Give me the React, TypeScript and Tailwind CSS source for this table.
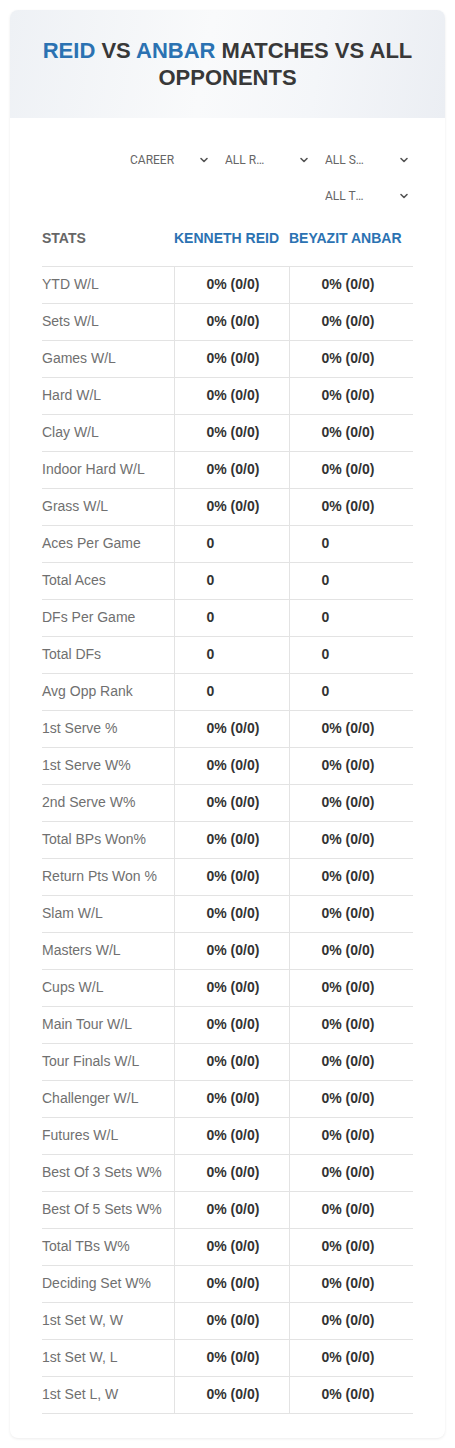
import { ChevronDown } from "lucide-react";

const pct = "0% (0/0)";

const rows: [string, string, string][] = [
  ["YTD W/L", pct, pct],
  ["Sets W/L", pct, pct],
  ["Games W/L", pct, pct],
  ["Hard W/L", pct, pct],
  ["Clay W/L", pct, pct],
  ["Indoor Hard W/L", pct, pct],
  ["Grass W/L", pct, pct],
  ["Aces Per Game", "0", "0"],
  ["Total Aces", "0", "0"],
  ["DFs Per Game", "0", "0"],
  ["Total DFs", "0", "0"],
  ["Avg Opp Rank", "0", "0"],
  ["1st Serve %", pct, pct],
  ["1st Serve W%", pct, pct],
  ["2nd Serve W%", pct, pct],
  ["Total BPs Won%", pct, pct],
  ["Return Pts Won %", pct, pct],
  ["Slam W/L", pct, pct],
  ["Masters W/L", pct, pct],
  ["Cups W/L", pct, pct],
  ["Main Tour W/L", pct, pct],
  ["Tour Finals W/L", pct, pct],
  ["Challenger W/L", pct, pct],
  ["Futures W/L", pct, pct],
  ["Best Of 3 Sets W%", pct, pct],
  ["Best Of 5 Sets W%", pct, pct],
  ["Total TBs W%", pct, pct],
  ["Deciding Set W%", pct, pct],
  ["1st Set W, W", pct, pct],
  ["1st Set W, L", pct, pct],
  ["1st Set L, W", pct, pct],
];

function Select({ label, w }: { label: string; w: string }) {
  return (
    <div className={`flex h-9 items-center justify-between pl-[10px] pr-[5px] text-[12px] text-[#666] ${w}`}>
      <span className="w-[45px] truncate">{label}</span>
      <ChevronDown size={12} strokeWidth={3.2} className="text-[#555]" />
    </div>
  );
}

export default function App() {
  return (
    <div className="min-h-[1448px] bg-white px-[10px] pt-[10px] font-['Liberation_Sans',Arial,sans-serif]">
      <div className="rounded-[8px] bg-white shadow-[0_1px_3px_rgba(0,0,0,0.08)]">
        {/* header */}
        <div className="flex h-[108px] items-center justify-center rounded-t-[8px] bg-[linear-gradient(100deg,#eef1f5_0%,#f9fafb_45%,#f4f6f9_70%,#ebeef3_100%)] px-6">
          <h1 className="text-center text-[22px] font-bold leading-[27px] text-[#383838]">
            <span className="text-[#2b72b2]">REID</span> VS{" "}
            <span className="text-[#2b72b2]">ANBAR</span> MATCHES VS ALL OPPONENTS
          </h1>
        </div>

        {/* filters */}
        <div className="mt-6 flex flex-col items-end pr-[30px] font-['Roboto',sans-serif]">
          <div className="flex">
            <Select label="CAREER" w="w-[95px]" />
            <Select label="ALL ROUNDS" w="w-[100px]" />
            <Select label="ALL SURFACES" w="w-[100px]" />
          </div>
          <Select label="ALL TOURNAMENTS" w="w-[100px]" />
        </div>

        {/* table */}
        <div className="px-8 pb-6 pt-[2px]">
          <table className="w-full border-collapse text-[14px]">
            <thead>
              <tr className="h-[50px] border-b border-[#e3e3e3]">
                <th className="w-[132px] pb-[4px] text-left font-bold text-[#666]">STATS</th>
                <th className="w-[115px] pb-[4px] text-left font-bold text-[#2b72b2]">KENNETH REID</th>
                <th className="pb-[4px] text-left font-bold text-[#2b72b2]">BEYAZIT ANBAR</th>
              </tr>
            </thead>
            <tbody>
              {rows.map(([label, a, b]) => (
                <tr key={label} className="h-[37px] border-b border-[#e3e3e3]">
                  <td className="text-[#707070]">{label}</td>
                  <td className="border-l border-[#e3e3e3] pl-8 font-bold text-[#333]">{a}</td>
                  <td className="border-l border-[#e3e3e3] pl-8 font-bold text-[#333]">{b}</td>
                </tr>
              ))}
            </tbody>
          </table>
        </div>
      </div>
    </div>
  );
}
